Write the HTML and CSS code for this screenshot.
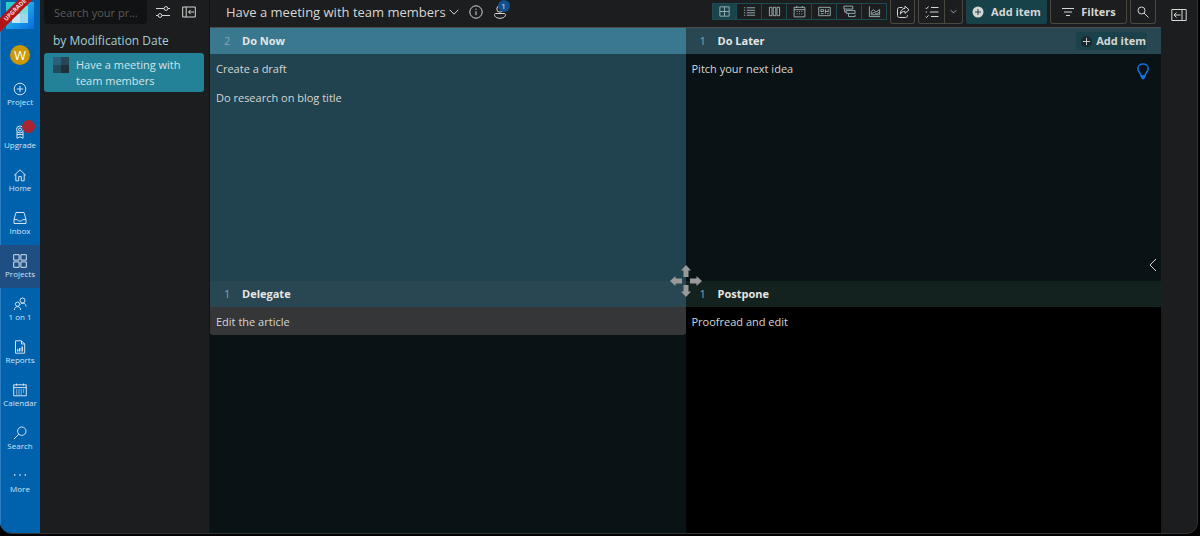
FILE: index.html
```
<!DOCTYPE html>
<html lang="en">
<head>
<meta charset="utf-8">
<title>Have a meeting with team members</title>
<link rel="stylesheet" href="styles.css">
</head>
<body>
<div class="window">
  <nav class="rail" aria-label="Main">
    <div class="brand">
      <svg class="logo" viewBox="0 0 28 27" aria-hidden="true"><defs><linearGradient id="lg" x1="0" y1="0" x2="1" y2="1"><stop offset="0" stop-color="#36d3c4"/><stop offset=".5" stop-color="#1aa3ea"/><stop offset="1" stop-color="#0a6be0"/></linearGradient></defs><path fill="url(#lg)" d="M0 0h28v27H0z"/><path fill="#4fb9e6" d="M6 4h16v17H6z"/><path fill="#c3e6f2" d="M6 12h8v9H6z"/><path fill="#9ed6ec" d="M14 12h8v9h-8z"/><path fill="#7fdcdc" d="M14 4h8v8h-8z"/></svg>
      <span class="ribbon">UPGRADE</span>
    </div>
    <button class="avatar">W</button>
    <a class="nav" href="#"><svg viewBox="0 0 14 14"><circle cx="7" cy="7" r="5.8"/><path d="M7 3.8v6.4M3.8 7h6.4"/></svg>Project</a>
    <a class="nav" href="#"><svg viewBox="0 0 14 14"><circle cx="7" cy="4.5" r="3.5"/><circle cx="7" cy="4.5" r="1.5"/><path d="M4 7v6.3l3-1.5 3 1.5V7M4 9.5h6"/></svg>Upgrade<span class="dot"></span></a>
    <a class="nav" href="#"><svg viewBox="0 0 14 14"><path d="M1.2 7.4 7 1.8l5.8 5.6M2.8 6v6.8h2.9V8.6h2.6v4.2h2.9V6"/></svg>Home</a>
    <a class="nav" href="#"><svg viewBox="0 0 14 14"><path d="M3 1.5h8l2 7v4H1v-4zM1 8.6h3.4c.3 2 4.900 2 5.200 0H13"/></svg>Inbox</a>
    <a class="nav active" href="#"><svg viewBox="0 0 14 14"><path d="M.7.7h5.400v5.400H.7zM7.900.7h5.400v5.400H7.900zM.7 7.900h5.400v5.400H.7zM7.900 7.900h5.400v5.400H7.900z"/></svg>Projects</a>
    <a class="nav" href="#"><svg viewBox="0 0 14 14"><circle cx="9.500" cy="3.500" r="2.500"/><circle cx="4.500" cy="7.200" r="2.100"/><path d="M1.400 13c0-4.500 6.200-4.500 6.200 0M7.500 7.200c2-2 5.500-1.200 5.500 2.400"/></svg>1 on 1</a>
    <a class="nav" href="#"><svg viewBox="0 0 14 14"><path d="M2.500.8h6l3.200 3.200v9.200H2.500zM8.500.8V4h3.200"/><path class="thick" d="M4.700 11.500V9.300M6.700 11.500V8M9.200 11.500V6.500"/></svg>Reports</a>
    <a class="nav" href="#"><svg viewBox="0 0 14 14"><path d="M.7 1.800h12.600v11H.7zM.7 4.600h12.600M3.500.6v2M10.500.6v2M3 7h1.200M5.400 7h1.200M7.700 7h1.200M10 7h1.200M3 9h1.200M5.400 9h1.200M7.700 9h1.200M10 9h1.200M3 11h1.200M5.400 11h1.200M7.700 11h1.200"/></svg>Calendar</a>
    <a class="nav" href="#"><svg viewBox="0 0 14 14"><circle cx="8.800" cy="5.200" r="4.200"/><path d="M5.800 8.200.9 13.100"/></svg>Search</a>
    <a class="nav" href="#"><svg viewBox="0 0 14 14"><path class="thick" d="M1 6h1.400M6.300 6h1.400M11.600 6h1.400"/></svg>More</a>
  </nav>

  <aside class="side">
    <div class="find">
      <input type="text" placeholder="Search your pr..." aria-label="Search your projects">
      <button class="plain" aria-label="Options"><svg class="ic" viewBox="0 0 14 14"><path d="M0 3.500h8M12 3.500h2M0 10.500h2M6 10.500h8"/><circle cx="10" cy="3.500" r="1.900"/><circle cx="4" cy="10.500" r="1.900"/></svg></button>
      <button class="plain" aria-label="Collapse list"><svg class="ic" viewBox="0 0 14 14"><path d="M.7 2h12.600v10H.7zM4.200 2v10M12 7H6.500M8.700 4.800 6.500 7l2.200 2.200"/></svg></button>
    </div>
    <h2>by Modification Date</h2>
    <a class="project" href="#"><svg class="thumb" viewBox="0 0 16 16" aria-hidden="true"><path fill="#2c6078" d="M0 0h8v8H0z"/><path fill="#25475a" d="M8 0h8v8H8z"/><path fill="#23495b" d="M0 8h8v8H0z"/><path fill="#1d3238" d="M8 8h8v8H8z"/></svg><span>Have a meeting with team members</span></a>
  </aside>

  <main class="main">
    <header class="bar">
      <h1>Have a meeting with team members</h1>
      <button class="plain" aria-label="Project menu"><svg class="chev" viewBox="0 0 10 10"><path d="M.7 2.800 5 7.200l4.300-4.400"/></svg></button>
      <button class="plain info" aria-label="Information"><svg class="ic" viewBox="0 0 14 14"><circle cx="7" cy="7" r="6.200"/><path d="M7 6.200v4M7 3.700v1.200"/></svg></button>
      <button class="plain people" aria-label="Members"><svg class="ic" viewBox="0 0 14 14"><circle cx="7" cy="4" r="3.200"/><path d="M2.500 8.500h9c1.800 0 1.500 4.800-4.500 4.800S.7 8.500 2.500 8.500z"/></svg><span class="count">1</span></button>
      <div class="views">
        <button class="on" aria-label="Matrix"><svg class="ic" viewBox="0 0 14 14"><path d="M2 2h10v10H2zM7 2v10M2 7h10"/></svg></button>
        <button aria-label="List"><svg class="ic" viewBox="0 0 14 14"><path d="M4 3h9M4 5.700h9M4 8.400h9M4 11h9M1 3h1.400M1 5.700h1.400M1 8.400h1.400M1 11h1.400"/></svg></button>
        <button aria-label="Kanban"><svg class="ic" viewBox="0 0 14 14"><path d="M1.500 2.500h2.800v9H1.500zM5.600 2.500h2.800v9H5.600zM9.700 2.500h2.800v9H9.700z"/></svg></button>
        <button aria-label="Calendar"><svg class="ic" viewBox="0 0 14 14"><path d="M1.200 2.500h11.600v10.300H1.200zM1.200 5h11.600M4 1v2M10 1v2M4 7h1M6.500 7h1M9 7h1M4 9.500h1M6.500 9.500h1M9 9.500h1"/></svg></button>
        <button aria-label="Whiteboard"><svg class="ic" viewBox="0 0 14 14"><path d="M.8 2.500h12.400v9H.8zM3 5h3v2H3zM8 4.500v5M8 7h3M11 4.500v3M3 9.300h3M10 9.300h1.500"/></svg></button>
        <button aria-label="Mind map"><svg class="ic" viewBox="0 0 14 14"><path d="M1 1.200h9.500v3.200H1zM3.500 6H13v3H3.500zM1.800 4.400v3.200h1.700M6 9v3.500h7M13 10.500v2"/></svg></button>
        <button aria-label="Chart"><svg class="ic" viewBox="0 0 14 14"><path d="M1.500 1.500v11h11.500M3.500 10.500V7L6 5l2.500 2.500L12.500 5v5.500zM4 9l3-1 2 1.500L12 8"/></svg></button>
      </div>
      <button class="box" aria-label="Share"><svg class="ic" viewBox="0 0 14 14"><path d="M6.500 2.500H3.500c-1.200 0-2 .8-2 2v6c0 1.200.8 2 2 2h6c1.200 0 2-.8 2-2V10M9 1.200l4 3.600-4 3.600V6.400C6.500 6.300 5 7.500 4.300 9.200 4.400 6 6 3.500 9 3.300z"/></svg></button>
      <div class="split">
        <button aria-label="Tasks"><svg class="ic" viewBox="0 0 14 14"><path d="M6 2.500h7.500M5 7h8.500M6 11.500h7.500M.5 2.800l1 1 2-2.300M.8 7h1.200M.5 11.600l1 1 2-2.300"/></svg></button>
        <button class="more" aria-label="Task options"><svg class="tiny" viewBox="0 0 10 10"><path d="M1 3l4 4 4-4"/></svg></button>
      </div>
      <button class="add"><svg class="plus" viewBox="0 0 12 12"><circle cx="6" cy="6" r="5.500"/><path d="M6 3v6M3 6h6"/></svg>Add item</button>
      <button class="box filters"><svg class="ic" viewBox="0 0 14 14"><path d="M1 3.500h12M3 7h8M5 10.500h4"/></svg>Filters</button>
      <button class="box find-btn" aria-label="Search"><svg class="ic" viewBox="0 0 14 14"><circle cx="5.500" cy="5.500" r="3.500"/><path d="M8 8l4.500 4.500"/></svg></button>
    </header>

    <div class="board">
      <section class="cell now">
        <header><span class="num">2</span><h3>Do Now</h3></header>
        <ul><li>Create a draft</li><li>Do research on blog title</li></ul>
      </section>
      <section class="cell later">
        <header><span class="num">1</span><h3>Do Later</h3><button class="add-small"><svg class="plus-dark" viewBox="0 0 12 12"><circle cx="6" cy="6" r="6"/><path d="M6 2v8M2 6h8"/></svg>Add item</button></header>
        <ul><li>Pitch your next idea</li></ul>
        <button class="plain hint" aria-label="Tips"><svg viewBox="0 0 12 18"><path d="M4 13c0-3-3.200-4-3.200-7.500C.8 2.800 3.200 1 6 1s5.200 1.800 5.200 4.500C11.200 9 8 10 8 13z"/><path class="base" d="M4 12.500h4V15L6 16.800 4 15z"/></svg></button>
        <button class="plain drawer" aria-label="Open panel"><svg viewBox="0 0 10 16"><path d="M8 2 2 8l6 6"/></svg></button>
      </section>
      <section class="cell delegate">
        <header><span class="num">1</span><h3>Delegate</h3></header>
        <ul><li class="hover">Edit the article</li></ul>
      </section>
      <section class="cell postpone">
        <header><span class="num">1</span><h3>Postpone</h3></header>
        <ul><li>Proofread and edit</li></ul>
      </section>
      <svg class="mover" viewBox="0 0 32 32" aria-hidden="true"><path d="M16 0l5 5.500h-2.500V12h-5V5.500H11zM16 32l5-5.500h-2.500V20h-5v6.500H11zM0 16l5.500-5v2.500H12v5H5.500V21zM32 16l-5.500-5v2.500H20v5h6.500V21z"/></svg>
    </div>
  </main>

  <aside class="edge">
    <button class="plain" aria-label="Show panel"><svg class="ic wide" viewBox="0 0 16 14"><path d="M.8 1.500h14.400v11H.8zM11 1.500v11M9.500 7H3M5.500 4.500 3 7l2.500 2.500"/></svg></button>
  </aside>
</div>
</body>
</html>
```
FILE: styles.css
```
* { box-sizing: border-box; }
body { margin: 0; background: #000; color: #d6d6d4; font: 11px/16px "Open Sans", "Noto Sans", sans-serif; }
button { font: inherit; color: inherit; margin: 0; padding: 0; border: 0; background: none; display: flex; align-items: center; justify-content: center; }
a { color: inherit; text-decoration: none; }
h1, h2, h3, ul { margin: 0; padding: 0; font-weight: 400; }
svg { flex: none; fill: none; stroke: currentColor; stroke-width: 1; }
.logo, .thumb { stroke: none; }
.ic { width: 14px; height: 14px; }
.wide { width: 16px; }

.window { display: flex; height: calc(100vh - 2px); margin-right: 2px; background: #1c1d1f; border-right: 1px solid #333436; border-bottom: 1px solid #333436; border-radius: 0 0 12px 12px; overflow: hidden; }

.rail { flex: 0 0 40px; display: flex; flex-direction: column; align-items: stretch; background: #0062ad; box-shadow: inset 1px 0 #2b7fc0; color: #d3e4f2; }
.brand { position: relative; height: 29px; padding: 2px 6px 0; }
.logo { display: block; width: 28px; height: 27px; }
.ribbon { position: absolute; left: -21px; top: 5px; width: 72px; transform: rotate(-45deg); background: #b01318; color: #f1dede; font-size: 6px; line-height: 10px; font-weight: 700; text-align: center; }
.avatar { width: 20px; height: 20px; margin: 16px auto 8px; border-radius: 50%; background: #cb9906; color: #fff; font-size: 13px; }
.nav { position: relative; height: 43px; padding-top: 9px; display: flex; flex-direction: column; align-items: center; font-size: 8px; line-height: 12px; }
.nav svg { width: 14px; height: 14px; }
.thick { stroke-width: 1.500; }
.nav.active { background: #1f4f82; }
.dot { position: absolute; right: 5px; top: 4px; width: 13px; height: 13px; border-radius: 50%; background: #a92630; }

.side { flex: 0 0 170px; padding: 0 5px 0 4px; background: #1c1d1f; border-right: 1px solid #121314; }
.find { display: flex; align-items: center; height: 24px; }
.find input { width: 103px; height: 24px; margin-right: 9px; padding: 0 10px; border: 0; border-radius: 0 0 4px 4px; background: #111213; color: #aaa; font: inherit; }
.find input::placeholder { color: #5e5b56; opacity: 1; }
.find button + button { margin-left: 12px; }
.side h2 { margin: 9px 0 4px 9px; font-size: 12px; line-height: 16px; color: #a3cdd4; }
.project { display: flex; gap: 7px; padding: 4px 9px 3px; border-radius: 3px; background: #238298; color: #d3e4e8; }
.thumb { width: 16px; height: 16px; }

.main { flex: 1; min-width: 0; display: flex; flex-direction: column; }
.bar { display: flex; align-items: flex-start; gap: 3px; height: 28px; padding-right: 5px; border-bottom: 1px solid #4b4c49; }
.bar h1 { margin-left: 16px; font-size: 13px; line-height: 24px; white-space: nowrap; }
.bar > .plain { height: 24px; }
.chev { width: 10px; height: 10px; }
.tiny { width: 7px; height: 7px; }
.info { margin-left: 7px; }
.people { position: relative; margin-left: 7px; }
.count { position: absolute; left: 5px; top: 0; width: 12px; height: 12px; border-radius: 50%; background: #10508e; color: #dde8f2; font-size: 8px; line-height: 12px; }
.views { display: flex; margin: 3px 0 0 auto; border: 1px solid #1c4b53; color: #9ab1b4; }
.views button { width: 25px; height: 15px; border-right: 1px solid #1c4b53; }
.views button:last-child { width: 24px; border: 0; }
.views .on { width: 24px; background: #1a444c; }
.views .ic { width: 13px; height: 13px; }
.box, .split { height: 24px; border: 1px solid #4a4841; border-top: 0; border-radius: 0 0 3px 3px; }
.box { width: 25px; }
.split { display: flex; }
.split button { width: 25px; }
.split .more { width: 18px; border-left: 1px solid #4a4841; }
.add { width: 81px; height: 24px; gap: 7px; border-radius: 0 0 2px 2px; background: #17424a; font-weight: 700; }
.plus { width: 12px; height: 12px; fill: #d6d6d4; stroke: none; }
.plus path { stroke: #17424a; }
.filters { width: 77px; gap: 6px; font-weight: 700; }
.find-btn { width: 26px; }

.board { position: relative; flex: 1; display: grid; grid-template: 1fr 1fr / 1fr 1fr; }
.cell { position: relative; min-width: 0; }
.cell header { display: flex; align-items: center; height: 26px; padding: 0 14px; }
.cell h3 { font-size: 11px; font-weight: 700; color: #e6e6e4; }
.num { width: 18px; color: #8fa4aa; }
.cell ul { list-style: none; }
.cell li { height: 28px; margin-bottom: 1px; padding: 0 6px; line-height: 30px; }
.cell .hover { background: #353638; border-radius: 0 0 3px 3px; }
.now { background: #21434f; }
.now header { background: #39788f; }
.later { background: #091215; }
.later header, .delegate header { background: #284753; }
.delegate { background: #091215; }
.postpone { background: #000; }
.postpone header { background: #13211f; }
.add-small { height: 18px; margin-left: auto; padding: 0 1px 0 5px; gap: 4px; border-radius: 2px; background: #1b424b; font-weight: 700; }
.plus-dark { width: 11px; height: 11px; fill: #17292e; stroke: none; }
.plus-dark path { stroke: #d6d6d4; }
.hint { position: absolute; right: 12px; top: 35px; color: #0d74e0; }
.hint svg { width: 12px; height: 18px; stroke-width: 1.500; }
.hint .base { fill: currentColor; stroke: none; }
.drawer { position: absolute; right: 3px; bottom: 8px; }
.drawer svg { width: 10px; height: 16px; }
.mover { position: absolute; left: calc(50% - 16px); top: calc(50% - 16px); width: 32px; height: 32px; fill: #9a9a9a; stroke: none; }

.edge { flex: 0 0 36px; display: flex; justify-content: center; align-items: flex-start; padding-top: 8px; background: #1c1d1f; }
```
